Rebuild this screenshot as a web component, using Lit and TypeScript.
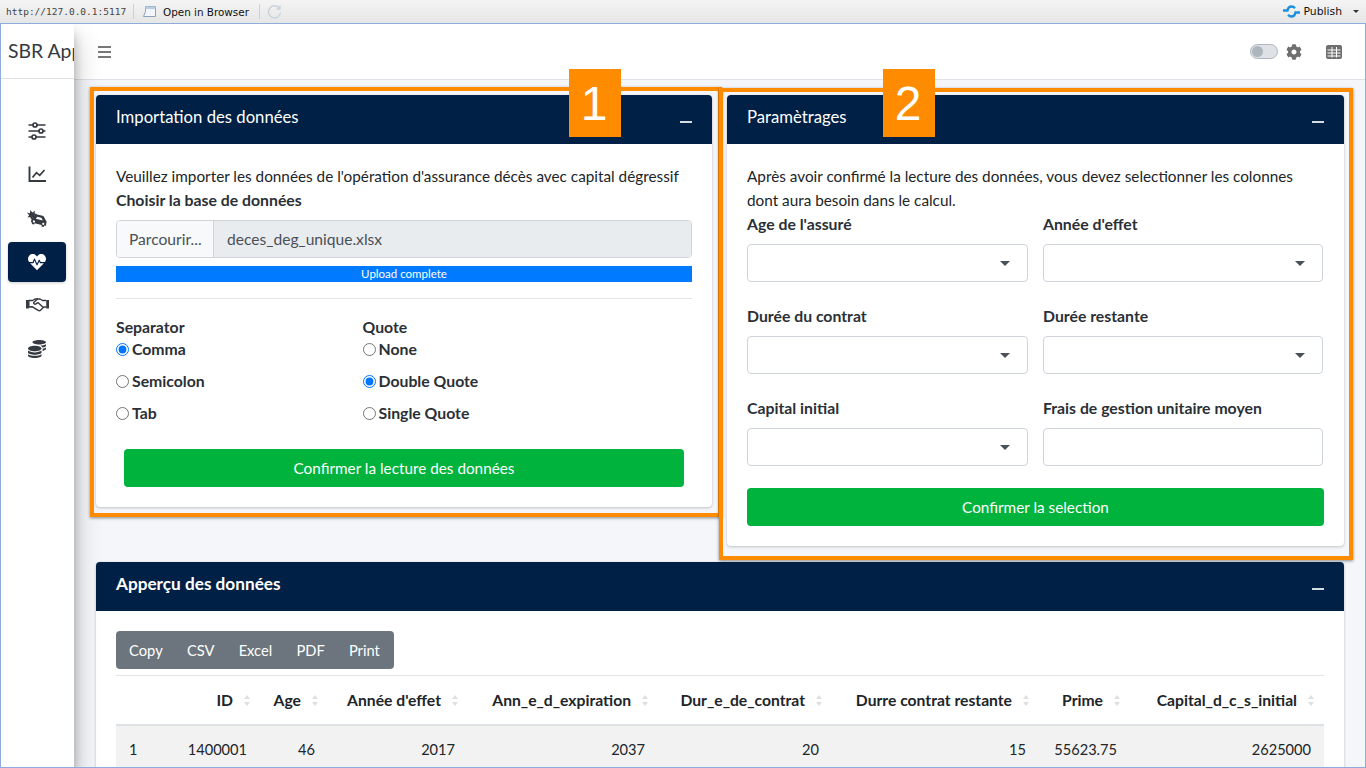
import { html, css, svg, LitElement, TemplateResult } from 'lit';
import { customElement } from 'lit/decorators.js';

const HEART =
  'M320.2 243.8l-49.7 99.4c-6 12.1-23.4 11.7-28.9-.6l-56.9-126.3-30 71.7H60.6l182.5 186.5c7.1 7.3 18.6 7.3 25.7 0L451.4 288H342.3l-22.1-44.2zM473.7 73.9l-2.4-2.5c-51.5-52.6-135.8-52.6-187.4 0L256 100l-27.9-28.5c-51.5-52.7-135.9-52.7-187.4 0l-2.4 2.4C-10.4 123.7-12.5 203 31 256h102.4l35.9-86.2c5.4-12.9 23.6-13.2 29.4-.4l58.2 129.3 49-97.9c5.9-11.8 22.7-11.8 28.6 0l27.6 55.2H481c43.5-53 41.4-132.3-7.3-182.1z';
const COINS =
  'M0 405.3V448c0 35.3 86 64 192 64s192-28.7 192-64v-42.7C342.7 434.4 267.2 448 192 448S41.3 434.4 0 405.3zM320 128c106 0 192-28.7 192-64S426 0 320 0 128 28.7 128 64s86 64 192 64zM0 300.4V352c0 35.3 86 64 192 64s192-28.7 192-64v-51.6c-41.3 34-116.9 51.6-192 51.6S41.3 334.4 0 300.4zm416 11c57.3-11.1 96-31.7 96-55.4v-42.7c-23.2 16.4-57.3 27.6-96 34.5v63.6zM192 160C86 160 0 195.8 0 240s86 80 192 80 192-35.8 192-80-86-80-192-80zm219.3 56.3c60-10.8 100.7-32 100.7-56.3v-42.7c-35.5 25.1-96.5 38.6-160.7 41.8 29.5 14.3 51.2 33.5 60 57.2z';
const COG =
  'M487.4 315.7l-42.6-24.6c4.3-23.2 4.3-47 0-70.2l42.6-24.6c4.9-2.8 7.1-8.6 5.5-14-11.1-35.6-30-67.8-54.7-94.6-3.8-4.1-10-5.1-14.8-2.3L380.8 110c-17.9-15.4-38.5-27.3-60.8-35.1V25.8c0-5.6-3.9-10.5-9.4-11.7-36.7-8.2-74.3-7.8-109.2 0-5.5 1.2-9.4 6.1-9.4 11.7V75c-22.2 7.9-42.8 19.8-60.8 35.1L88.7 85.5c-4.9-2.8-11-1.9-14.8 2.3-24.7 26.7-43.6 58.9-54.7 94.6-1.7 5.4.6 11.2 5.5 14L67.3 221c-4.3 23.2-4.3 47 0 70.2l-42.6 24.6c-4.9 2.8-7.1 8.6-5.5 14 11.1 35.6 30 67.8 54.7 94.6 3.8 4.1 10 5.1 14.8 2.3l42.6-24.6c17.9 15.4 38.5 27.3 60.8 35.1v49.2c0 5.6 3.9 10.5 9.4 11.7 36.7 8.2 74.3 7.8 109.2 0 5.5-1.2 9.4-6.1 9.4-11.7v-49.2c22.2-7.9 42.8-19.8 60.8-35.1l42.6 24.6c4.9 2.8 11 1.9 14.8-2.3 24.7-26.7 43.6-58.9 54.7-94.6 1.5-5.5-.7-11.3-5.6-14.1zM256 336c-44.1 0-80-35.9-80-80s35.9-80 80-80 80 35.9 80 80-35.9 80-80 80z';

// each nav icon: [box width, box height, drawing]
const navIcons: [number, number, TemplateResult][] = [
  [
    18,
    18,
    svg`<g fill="none" stroke="currentColor" stroke-width="1.7"><path d="M.5 3h17M.5 9h17M.5 15h17"/><circle cx="7" cy="3" r="2" fill="#fff"/><circle cx="13" cy="9" r="2" fill="#fff"/><circle cx="6" cy="15" r="2" fill="#fff"/></g>`,
  ],
  [
    18,
    18,
    svg`<g fill="none" stroke="currentColor" stroke-width="1.900"><path d="M1.500 1.500v14.500H18"/><path d="M4.500 12.500l4-4.800 3.200 2.600 4.800-5.300" stroke-width="1.700"/></g>`,
  ],
  [
    21,
    18,
    svg`<g fill="currentColor"><path d="M0 3.500l3 .8L3.200 1l2.200 2.600L8 1.800 7.500 4.500l2.500.4-2.700 2 .8 2.600-2.700-1.100-1.200 2.300-1-2.600-2.700.5 1.600-2.300z"/><path d="M10.200 5.500l5.300 1.300c.8.200 1.400.7 1.700 1.500l1.300 2.800c.8.600 1.200 1.500 1 2.500l-.7 3.400-1.700-.4-.3 1.400-2.400-.6.300-1.400-7.200-1.800-.3 1.400-2.400-.6.300-1.400-1.200-.3.700-3.300c.2-1 1-1.700 2-1.900l1.900-2.500c.5-.6 1.500-.3 1.400-.1zm.1 2.200l-1.500 2 6.900 1.700-1-2.200c-.1-.3-.3-.5-.6-.5zm-2.900 3.800a1.100 1.100 0 1 0-.5 2.100 1.100 1.100 0 0 0 .5-2.100zm9.300 2.300a1.100 1.100 0 1 0-.5 2.100 1.100 1.100 0 0 0 .5-2.100z"/></g>`,
  ],
  [18, 18, svg`<path fill="currentColor" transform="scale(.03516)" d="${HEART}"/>`],
  [
    23,
    14,
    svg`<g fill="currentColor"><path d="M0 2h2.800v8.500H0zM20.200 2H23v8.500h-2.800z"/></g><g fill="none" stroke="currentColor" stroke-width="1.400" stroke-linejoin="round"><path d="M2.800 2.500h3.900L9 1h2.500L8 4.300c-.8 1 .5 2.500 1.900 1.600l2-1.300 5.400 5-2.600 2.500c-.8.700-1.800.8-2.600.2L6.500 8.800 2.800 9z"/><path d="M20.200 2.500h-3.700L14 1h-3M20.200 9h-2.900"/></g>`,
  ],
  [18, 18, svg`<path fill="currentColor" transform="scale(.03516)" d="${COINS}"/>`],
];

const headers = ['', 'ID', 'Age', "Année d'effet", 'Ann_e_d_expiration', 'Dur_e_de_contrat', 'Durre contrat restante', 'Prime', 'Capital_d_c_s_initial'];
const firstRow = ['1', '1400001', '46', '2017', '2037', '20', '15', '55623.75', '2625000'];
const colWidths = [60, 84, 68, 140, 190, 174, 207, 91, 194];

@customElement('app-root')
export class AppRoot extends LitElement {
  static styles = css`
    :host {
      display: block;
      position: relative;
      height: 768px;
      overflow: hidden;
      font-family: 'Lato', 'Liberation Sans', sans-serif;
      font-size: 15.3px;
      line-height: 24px;
      color: #212529;
    }
    .toolbar {
      height: 23px;
      display: flex;
      align-items: center;
      background: linear-gradient(#f4f4f4, #e6e6e6);
      font-family: 'DejaVu Sans', sans-serif;
      font-size: 10.4px;
      color: #111;
    }
    .url {
      font-family: 'DejaVu Sans Mono', monospace;
      font-size: 9.500px;
      color: #444;
      padding-left: 6px;
      width: 120px;
    }
    .sep {
      width: 1px;
      height: 15px;
      background: #cfcfcf;
      margin: 0 7px;
    }
    .sep.after-tool {
      margin-left: 10px;
    }
    .tool {
      display: flex;
      align-items: center;
      gap: 6px;
    }
    .spacer {
      flex: 1;
    }
    .publish {
      display: flex;
      align-items: center;
      gap: 4px;
      padding-right: 7px;
      font-size: 10.800px;
    }
    .caret-sm {
      width: 0;
      height: 0;
      margin-left: 7px;
      border: 3px solid transparent;
      border-top: 3px solid #333;
      border-bottom: 0;
    }
    .frame {
      height: 745px;
      box-sizing: border-box;
      border: 1px solid #8fabda;
      display: flex;
      overflow: hidden;
    }
    .sidebar {
      width: 73px;
      flex: none;
      background: #fff;
      position: relative;
      z-index: 2;
      box-shadow: 0 14px 28px rgba(0, 0, 0, 0.25), 0 10px 10px rgba(0, 0, 0, 0.22);
      overflow: hidden;
    }
    .brand {
      height: 55px;
      box-sizing: border-box;
      border-bottom: 1px solid #dee2e6;
      padding-left: 7px;
      font-size: 19.4px;
      line-height: 54px;
      white-space: nowrap;
      color: #343a40;
    }
    .nav {
      display: flex;
      flex-direction: column;
      gap: 3.670px;
      padding: 31.700px 8px 0 7px;
    }
    .nav-item {
      height: 40px;
      border-radius: 4px;
      display: flex;
      align-items: center;
      justify-content: center;
      color: #343a40;
    }
    .nav-item.active {
      background: #002046;
      color: #fff;
      box-shadow: 0 1px 3px rgba(0, 0, 0, 0.2);
    }
    .main {
      flex: 1;
      min-width: 0;
      background: #f4f6f9;
    }
    .header {
      height: 56px;
      box-sizing: border-box;
      background: #fff;
      border-bottom: 1px solid #dee2e6;
      display: flex;
      align-items: center;
      padding: 0 23px 0 24px;
      color: #6f6f6f;
    }
    .burger {
      width: 13px;
      height: 12px;
      border-top: 2px solid #777;
      border-bottom: 2px solid #777;
      position: relative;
      box-sizing: border-box;
    }
    .burger::after {
      content: '';
      position: absolute;
      left: 0;
      right: 0;
      top: 3px;
      height: 2px;
      background: #777;
    }
    .switch {
      width: 28px;
      height: 15px;
      box-sizing: border-box;
      border-radius: 8px;
      background: #dee2e6;
      border: 1px solid #adb5bd;
      padding: 1px;
      margin-right: 8px;
    }
    .switch i {
      display: block;
      width: 11px;
      height: 11px;
      border-radius: 50%;
      background: #adb5bd;
    }
    .grid-icon {
      margin-left: 24px;
    }
    .content {
      padding: 15px 21px 15px 22px;
      display: grid;
      grid-template-columns: 616px 617px;
      gap: 16px 15px;
      align-items: start;
    }
    .card {
      background: #fff;
      border-radius: 4px;
      box-shadow: 0 0 1px rgba(0, 0, 0, 0.125), 0 1px 3px rgba(0, 0, 0, 0.2);
      overflow: hidden;
    }
    .card.wide {
      grid-column: 1 / 3;
    }
    .card-head {
      height: 49px;
      box-sizing: border-box;
      padding: 0 20px 5px;
      background: #002046;
      color: #fff;
      display: flex;
      align-items: center;
      justify-content: space-between;
      font-size: 16.700px;
    }
    .wide .card-head {
      font-weight: 700;
      font-size: 17.200px;
    }
    .minus {
      width: 12px;
      height: 2px;
      background: #d5dbe3;
      margin-top: 10px;
    }
    .card-body {
      padding: 20px;
    }
    .bold {
      font-weight: 700;
      font-size: 15.800px;
      color: #2b3036;
    }
    .file {
      display: flex;
      height: 38px;
      margin-top: 8px;
      box-sizing: border-box;
      border: 1px solid #ced4da;
      border-radius: 4px;
      overflow: hidden;
      color: #495057;
      line-height: 36px;
      font-size: 15.600px;
    }
    .file-btn {
      width: 97px;
      flex: none;
      box-sizing: border-box;
      padding-left: 12px;
      background: #f8f9fa;
      border-right: 1px solid #ced4da;
    }
    .file-name {
      flex: 1;
      padding-left: 13px;
      background: #e9ecef;
    }
    .progress {
      height: 16px;
      margin-top: 8px;
      background: #007bff;
      color: #fff;
      font-size: 11.500px;
      line-height: 16px;
      text-align: center;
    }
    hr {
      border: 0;
      border-top: 1px solid #e3e6e9;
      margin: 16px 0;
    }
    .radios {
      display: grid;
      grid-template-columns: 246.500px 1fr;
    }
    .radio-title {
      line-height: 22px;
      margin-top: 1px;
    }
    .radio {
      display: flex;
      align-items: center;
      height: 22px;
      margin-bottom: 10px;
    }
    .radio input {
      margin: 0 3px 0 0;
    }
    .btn {
      height: 38px;
      border-radius: 4px;
      background: #00b33c;
      color: #fff;
      text-align: center;
      line-height: 38px;
    }
    .btn.inset {
      margin: 15px 8px 0;
    }
    .fields {
      display: grid;
      grid-template-columns: 281px 280px;
      gap: 22px 15px;
    }
    .select {
      height: 38px;
      margin-top: 8px;
      box-sizing: border-box;
      border: 1px solid #ced4da;
      border-radius: 4px;
      background: #fff;
      display: flex;
      align-items: center;
      justify-content: flex-end;
      padding-right: 17px;
    }
    .select::after {
      content: '';
      border: 5px solid transparent;
      border-top: 5px solid #495057;
      border-bottom: 0;
    }
    .select.plain::after {
      display: none;
    }
    .btn.full {
      margin-top: 22px;
    }
    .buttons {
      display: inline-flex;
      height: 38px;
      background: #6c757d;
      border-radius: 4px;
      color: #fff;
      line-height: 38px;
      font-size: 14.700px;
      padding: 0 2.500px 0 1px;
    }
    .buttons span {
      padding: 0 12.100px;
    }
    .table-wrap {
      margin-top: 6px;
      border-top: 1px solid #e3e6e9;
    }
    table {
      border-collapse: collapse;
      table-layout: fixed;
      width: 1208px;
    }
    th {
      height: 49px;
      box-sizing: border-box;
      padding: 0 27px 0 0;
      text-align: right;
      font-weight: 700;
      font-size: 15.700px;
      white-space: nowrap;
      position: relative;
      border-bottom: 2px solid #dee2e6;
    }
    th.sort::before,
    th.sort::after {
      content: '';
      position: absolute;
      right: 10px;
      border: 3px solid transparent;
    }
    th.sort::before {
      top: 19px;
      border-top: 0;
      border-bottom: 4px solid #dde0e3;
    }
    th.sort::after {
      top: 26px;
      border-bottom: 0;
      border-top: 4px solid #dde0e3;
    }
    td {
      height: 48px;
      padding: 0 13px 0 0;
      text-align: right;
      font-size: 14.600px;
      background: #f2f2f2;
    }
    td:first-child {
      padding: 0 0 0 13px;
      text-align: left;
    }
    .mark {
      position: absolute;
      box-sizing: border-box;
      border: 4px solid #ff8c00;
      box-shadow: 0 1px 3px rgba(0, 0, 0, 0.45);
      z-index: 3;
    }
    .mark.one {
      left: 90px;
      top: 87px;
      width: 632px;
      height: 430px;
    }
    .mark.two {
      left: 719px;
      top: 88px;
      width: 634px;
      height: 472px;
    }
    .tag {
      position: absolute;
      top: 69px;
      width: 52px;
      height: 68px;
      box-sizing: border-box;
      padding-right: 2px;
      background: #ff8c00;
      color: #fff;
      font-family: 'Liberation Sans', sans-serif;
      font-size: 48px;
      line-height: 69px;
      text-align: center;
      z-index: 4;
    }
    .tag.one {
      left: 569px;
    }
    .tag.two {
      left: 883px;
    }
  `;

  private radio(name: string, label: string, checked = false) {
    return html`<label class="radio bold">
      <input type="radio" name=${name} ?checked=${checked} />${label}
    </label>`;
  }

  private field(label: string, plain = false) {
    return html`<div>
      <div class="bold">${label}</div>
      <div class="select ${plain ? 'plain' : ''}"></div>
    </div>`;
  }

  private card(title: string, body: TemplateResult, cls = '') {
    return html`<section class="card ${cls}">
      <div class="card-head"><span>${title}</span><span class="minus"></span></div>
      <div class="card-body">${body}</div>
    </section>`;
  }

  private renderToolbar() {
    return html`<div class="toolbar">
      <span class="url">http://127.0.0.1:5117</span>
      <span class="sep"></span>
      <span class="tool">
        <svg width="16" height="13" viewBox="0 0 16 13">
          <path d="M4.500 1.500h10v10h-12l2-5z" fill="#f2f6fb" stroke="#8fa3b8" />
          <path d="M4.500 1.500h10v2.500h-10z" fill="#b9cde2" />
        </svg>
        Open in Browser
      </span>
      <span class="sep after-tool"></span>
      <svg width="15" height="15" viewBox="0 0 15 15" fill="none" stroke="#c9d3dd" stroke-width="1.500">
        <path d="M12.500 4.500a6 6 0 1 0 1 4M13 1.500v3.500h-3.500" />
      </svg>
      <span class="spacer"></span>
      <span class="publish">
        <svg width="17" height="13" viewBox="0 0 17 13" fill="none" stroke="#1a8fe0" stroke-width="2.400">
          <path d="M0 5.500h4.500c.5-2.500 2-4 4-4 1.500 0 2.500.6 3.500 1.600M17 7.500h-4.500c-.5 2.500-2 4-4 4-1.500 0-2.500-.6-3.500-1.600" />
        </svg>
        Publish<span class="caret-sm"></span>
      </span>
    </div>`;
  }

  private renderHeader() {
    return html`<div class="header">
      <span class="burger"></span>
      <span class="spacer"></span>
      <span class="switch"><i></i></span>
      <svg width="16" height="16" viewBox="0 0 512 512"><path fill="currentColor" d="${COG}" /></svg>
      <svg class="grid-icon" width="16" height="14" viewBox="0 0 16 14">
        <rect width="16" height="14" rx="2" fill="currentColor" />
        <path d="M1.500 5h13M1.500 8h13M1.500 11h13M6 2v10.500M10.500 2v10.500" stroke="#fff" stroke-width="1" />
      </svg>
    </div>`;
  }

  private renderImport() {
    return html`
      <div>Veuillez importer les données de l'opération d'assurance décès avec capital dégressif</div>
      <div class="bold">Choisir la base de données</div>
      <div class="file">
        <span class="file-btn">Parcourir...</span>
        <span class="file-name">deces_deg_unique.xlsx</span>
      </div>
      <div class="progress">Upload complete</div>
      <hr />
      <div class="radios">
        <div>
          <div class="bold radio-title">Separator</div>
          ${this.radio('sep', 'Comma', true)} ${this.radio('sep', 'Semicolon')} ${this.radio('sep', 'Tab')}
        </div>
        <div>
          <div class="bold radio-title">Quote</div>
          ${this.radio('quote', 'None')} ${this.radio('quote', 'Double Quote', true)} ${this.radio('quote', 'Single Quote')}
        </div>
      </div>
      <div class="btn inset">Confirmer la lecture des données</div>
    `;
  }

  private renderParams() {
    return html`
      <div>Après avoir confirmé la lecture des données, vous devez selectionner les colonnes dont aura besoin dans le calcul.</div>
      <div class="fields">
        ${this.field("Age de l'assuré")} ${this.field("Année d'effet")} ${this.field('Durée du contrat')}
        ${this.field('Durée restante')} ${this.field('Capital initial')} ${this.field('Frais de gestion unitaire moyen', true)}
      </div>
      <div class="btn full">Confirmer la selection</div>
    `;
  }

  private renderPreview() {
    return html`
      <div class="buttons">
        ${['Copy', 'CSV', 'Excel', 'PDF', 'Print'].map(b => html`<span>${b}</span>`)}
      </div>
      <div class="table-wrap">
        <table>
          <colgroup>${colWidths.map(w => html`<col style="width:${w}px" />`)}</colgroup>
          <thead>
            <tr>${headers.map(h => html`<th class=${h ? 'sort' : ''}>${h}</th>`)}</tr>
          </thead>
          <tbody>
            <tr>${firstRow.map(c => html`<td>${c}</td>`)}</tr>
          </tbody>
        </table>
      </div>
    `;
  }

  render() {
    return html`
      ${this.renderToolbar()}
      <div class="frame">
        <aside class="sidebar">
          <div class="brand">SBR App</div>
          <nav class="nav">
            ${navIcons.map(
              ([w, h, icon], i) => html`<div class="nav-item ${i === 3 ? 'active' : ''}">
                <svg width=${w} height=${h} viewBox="0 0 ${w} ${h}">${icon}</svg>
              </div>`
            )}
          </nav>
        </aside>
        <div class="main">
          ${this.renderHeader()}
          <div class="content">
            ${this.card('Importation des données', this.renderImport())}
            ${this.card('Paramètrages', this.renderParams())}
            ${this.card('Apperçu des données', this.renderPreview(), 'wide')}
          </div>
        </div>
      </div>
      <div class="mark one"></div>
      <div class="mark two"></div>
      <div class="tag one">1</div>
      <div class="tag two">2</div>
    `;
  }
}
